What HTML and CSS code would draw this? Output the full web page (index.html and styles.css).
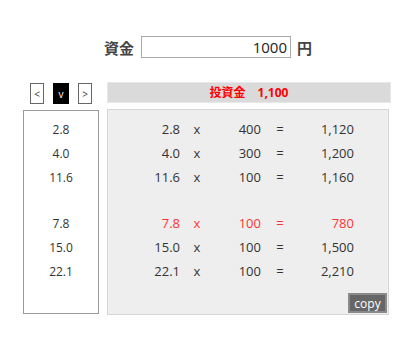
FILE: index.html
```html
<!DOCTYPE html>
<html lang="ja">
<head>
<meta charset="utf-8">
<link rel="stylesheet" href="styles.css">
</head>
<body>
<div class="page">
  <div class="fund">
    <span class="fund-label">資金</span>
    <input class="fund-input" type="text" value="1000">
    <span class="fund-unit">円</span>
  </div>
  <div class="main">
    <div class="side">
      <div class="nav">
        <button class="nav-btn">&lt;</button>
        <button class="nav-btn active">v</button>
        <button class="nav-btn">&gt;</button>
      </div>
      <div class="list">
        <div class="list-row">2.8</div>
        <div class="list-row">4.0</div>
        <div class="list-row">11.6</div>
        <div class="list-gap"></div>
        <div class="list-row">7.8</div>
        <div class="list-row">15.0</div>
        <div class="list-row">22.1</div>
      </div>
    </div>
    <div class="content">
      <div class="total">投資金　1,100</div>
      <div class="panel">
        <div class="calc">
          <span class="num">2.8</span><span class="op">x</span><span class="num">400</span><span class="op">=</span><span class="num">1,120</span>
          <span class="num">4.0</span><span class="op">x</span><span class="num">300</span><span class="op">=</span><span class="num">1,200</span>
          <span class="num">11.6</span><span class="op">x</span><span class="num">100</span><span class="op">=</span><span class="num">1,160</span>
          <span class="spacer"></span>
          <span class="num hit">7.8</span><span class="op hit">x</span><span class="num hit">100</span><span class="op hit">=</span><span class="num hit">780</span>
          <span class="num">15.0</span><span class="op">x</span><span class="num">100</span><span class="op">=</span><span class="num">1,500</span>
          <span class="num">22.1</span><span class="op">x</span><span class="num">100</span><span class="op">=</span><span class="num">2,210</span>
        </div>
        <button class="copy">copy</button>
      </div>
    </div>
  </div>
</div>
</body>
</html>
```
FILE: styles.css
```css
* { box-sizing: border-box; }
body {
  margin: 0;
  background: #fff;
  font-family: "Open Sans", "Noto Sans CJK JP", sans-serif;
  color: #333;
}
.page {
  width: 416px;
  padding-top: 36px;
}
.fund {
  display: flex;
  justify-content: center;
  align-items: center;
  height: 22px;
}
.fund-label {
  font-size: 15px;
  font-weight: bold;
  color: #444;
  margin-right: 7px;
  font-family: "Noto Sans CJK JP", sans-serif;
}
.fund-input {
  width: 150px;
  height: 22px;
  border: 1px solid #aaa;
  text-align: right;
  font-family: "Open Sans", sans-serif;
  font-size: 15px;
  color: #222;
  padding: 0 3px;
  margin: 0;
}
.fund-unit {
  font-size: 15px;
  font-weight: bold;
  color: #444;
  margin-left: 6px;
  font-family: "Noto Sans CJK JP", sans-serif;
}
.main {
  display: flex;
  margin-top: 24px;
  padding-left: 23px;
  gap: 8px;
}
.side {
  width: 76px;
  display: flex;
  flex-direction: column;
}
.nav {
  display: flex;
  justify-content: center;
  gap: 9px;
  margin-top: 1px;
  height: 21px;
}
.nav-btn {
  width: 14px;
  height: 21px;
  padding: 0;
  margin: 0;
  border: 1px solid #666;
  background: #fff;
  color: #333;
  font-family: "Open Sans", sans-serif;
  font-size: 10px;
  line-height: 18px;
}
.nav-btn.active {
  width: 16px;
  background: #000;
  border-color: #000;
  color: #fff;
}
.list {
  margin-top: 6px;
  height: 204px;
  border: 1px solid #999;
  padding-top: 7px;
  display: flex;
  flex-direction: column;
  align-items: center;
  font-size: 12px;
}
.list-row {
  height: 24px;
  line-height: 24px;
}
.list-gap { height: 22px; }
.content {
  width: 284px;
  display: flex;
  flex-direction: column;
}
.total {
  height: 21px;
  background: #dadada;
  border: 1px solid #e8e8e8;
  color: #f00;
  font-weight: bold;
  font-size: 12px;
  text-align: center;
  line-height: 19px;
  font-family: "Open Sans", "Noto Sans CJK JP", sans-serif;
}
.panel {
  margin-top: 6px;
  width: 282px;
  height: 206px;
  background: #eee;
  border: 1px solid #d6d6d6;
  display: flex;
  flex-direction: column;
  padding-top: 7px;
}
.calc {
  display: grid;
  grid-template-columns: 72px 34px 47px 38px 55px;
  font-size: 13px;
}
.calc span {
  height: 24px;
  line-height: 24px;
}
.num { text-align: right; }
.op { text-align: center; }
.hit { color: #f33; }
.calc .spacer {
  grid-column: 1 / -1;
  height: 22px;
}
.copy {
  margin-top: auto;
  align-self: flex-end;
  margin-right: 1px;
  margin-bottom: 1px;
  width: 39px;
  height: 20px;
  padding: 0;
  background: #666;
  border: 2px solid #8a8a8a;
  color: #fff;
  font-family: "Open Sans", sans-serif;
  font-size: 12px;
  line-height: 15px;
}
```
